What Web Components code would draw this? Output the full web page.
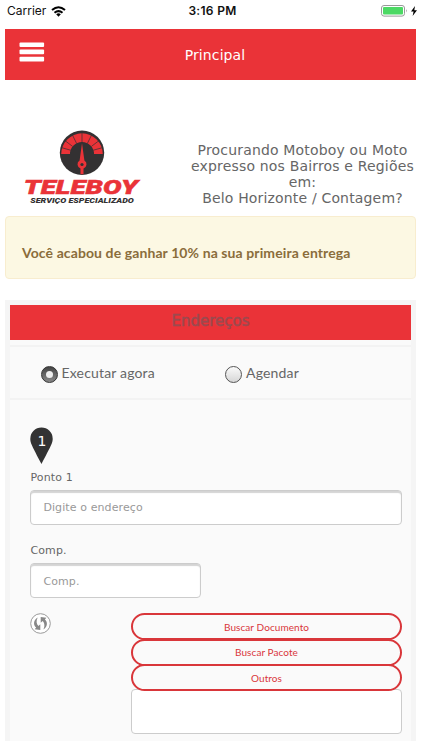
<!DOCTYPE html>
<html lang="pt-BR">
<head>
<meta charset="utf-8">
<title>Teleboy</title>
<style>
  * { box-sizing: border-box; }
  body {
    margin: 0;
    width: 422px;
    height: 750px;
    overflow: hidden;
    background: #fff;
    color: #666;
    font-family: "DejaVu Sans", sans-serif;
    --red: #ea3338;
    --lato: Lato, sans-serif;
  }
</style>
</head>
<body>
<app-screen>
  <status-bar slot="status" carrier="Carrier" time="3:16 PM"></status-bar>
  <app-header>Principal</app-header>
  <brand-hero>
    <div>Procurando Motoboy ou Moto</div>
    <div>expresso nos Bairros e Regiões</div>
    <div>em:</div>
    <div>Belo Horizonte / Contagem?</div>
  </brand-hero>
  <promo-alert>Você acabou de ganhar 10% na sua primeira entrega</promo-alert>
  <address-panel heading="Endereços">
    <radio-option slot="when" checked>Executar agora</radio-option>
    <radio-option slot="when">Agendar</radio-option>
    <map-pin>1</map-pin>
    <text-field class="address" label="Ponto 1" placeholder="Digite o endereço"></text-field>
    <text-field class="comp" label="Comp." placeholder="Comp."></text-field>
    <task-picker>
      <pill-button>Buscar Documento</pill-button>
      <pill-button>Buscar Pacote</pill-button>
      <pill-button>Outros</pill-button>
    </task-picker>
  </address-panel>
</app-screen>

<script>
class AppScreen extends HTMLElement {
  connectedCallback() {
    this.attachShadow({ mode: 'open' });
    this.shadowRoot.innerHTML = `
      <style>
        :host { display: block; }
        main { display: flex; flex-direction: column; padding: 0 6px 0 5px; }
      </style>
      <slot name="status"></slot>
      <main><slot></slot></main>
    `;
  }
}

class StatusBar extends HTMLElement {
  connectedCallback() {
    this.attachShadow({ mode: 'open' });
    this.shadowRoot.innerHTML = `
      <style>
        :host {
          display: grid;
          grid-template-columns: 1fr auto 1fr;
          align-items: center;
          height: 28px;
          padding: 0 5px 6px 7px;
          box-sizing: border-box;
          color: #111;
          font: 12px/16px Inter, sans-serif;
        }
        .left, .right { display: flex; align-items: center; }
        .left { gap: 5px; }
        .right { justify-content: flex-end; gap: 3px; }
        .time { font-weight: 600; letter-spacing: .3px; margin-left: 1px; }
        svg { display: block; }
      </style>
      <div class="left">
        <span>${this.getAttribute('carrier')}</span>
        <svg width="15" height="11" viewBox="0 0 15 11" fill="none" stroke="#000" stroke-width="2">
          <path d="M1 4.1Q7.5-1.6 14 4.1M3.5 6.8Q7.5 3.4 11.5 6.8"/>
          <path d="M5.2 8.2Q7.5 6.4 9.8 8.2L7.5 10.7Z" fill="#000" stroke="none"/>
        </svg>
      </div>
      <span class="time">${this.getAttribute('time')}</span>
      <div class="right">
        <svg width="27" height="12" viewBox="0 0 27 12">
          <rect x=".5" y=".5" width="23" height="10.6" rx="2.5" fill="#fff" stroke="#999"/>
          <rect x="2" y="2" width="20" height="7.6" rx="1" fill="#4cd964"/>
          <path d="M25 4Q26.6 5.8 25 7.6Z" fill="#999"/>
        </svg>
        <svg width="6" height="10" viewBox="0 0 6 10"><path d="M4 0L0 5.6H2.6L1.6 10L6 4.2H3.3Z"/></svg>
      </div>
    `;
  }
}

class AppHeader extends HTMLElement {
  connectedCallback() {
    this.attachShadow({ mode: 'open' });
    this.shadowRoot.innerHTML = `
      <style>
        :host {
          display: grid;
          grid-template-columns: 1fr auto 1fr;
          align-items: center;
          height: 51px;
          margin-top: .6px;
          padding: 0 14px;
          box-sizing: border-box;
          background: var(--red);
          color: #fff;
          font-size: 14px;
        }
        .title { padding-top: 2px; letter-spacing: .1px; margin-left: 9px; }
        svg { display: block; margin-bottom: 4px; }
      </style>
      <svg width="26" height="20" viewBox="0 0 26 20" fill="#fff">
        <rect x=".5" y=".5" width="24.6" height="4.6" rx="1"/>
        <rect x=".5" y="7.6" width="24.6" height="4.6" rx="1"/>
        <rect x=".5" y="14.8" width="24.6" height="4.6" rx="1"/>
      </svg>
      <span class="title"><slot></slot></span>
    `;
  }
}

class BrandHero extends HTMLElement {
  connectedCallback() {
    this.attachShadow({ mode: 'open' });
    this.shadowRoot.innerHTML = `
      <style>
        :host {
          display: flex;
          justify-content: space-between;
          height: 136px;
          padding: 50px 0 0 17px;
          box-sizing: border-box;
        }
        svg { display: block; }
        .text {
          width: 227px;
          padding-top: 12px;
          text-align: center;
          white-space: nowrap;
          font-size: 14px;
          line-height: 16.3px;
          letter-spacing: .17px;
        }
      </style>
      <svg width="120" height="78" viewBox="0 0 120 78">
        <g transform="translate(60 22.8)">
          <circle r="22.2" fill="#333132"/>
          <path d="M-20.8 1.3A20.8 20.8 0 0 1 20.8 1.3H12A12 12 0 0 0-12 1.3Z" fill="var(--red)"/>
          <path d="M-20.6-5.2L-11-2.5M-16.8-12L-9.4-6.4M-9.7-18L-5.2-9M0-21V-10M9.7-18L5.2-9M16.8-12L9.4-6.4M20.6-5.2L11-2.5" fill="none" stroke="#333132" stroke-width=".7"/>
          <path d="M0-9.5L2.4 7.8A4.3 4.3 0 0 1 1.5 15.6V21.5H-1.5V15.6A4.3 4.3 0 0 1-2.4 7.8Z" fill="var(--red)"/>
          <circle cy="11.7" r="1.6" fill="#333132"/>
        </g>
        <g font-family="Roboto, sans-serif" font-style="italic">
          <text x="1.8" y="63.8" font-size="20.5" font-weight="900" textLength="114" lengthAdjust="spacingAndGlyphs" fill="var(--red)" stroke="var(--red)" stroke-width=".5">TELEBOY</text>
          <text x="8.3" y="73.2" font-size="6.8" font-weight="900" textLength="103.5" lengthAdjust="spacingAndGlyphs" fill="#333132">SERVIÇO ESPECIALIZADO</text>
        </g>
      </svg>
      <div class="text"><slot></slot></div>
    `;
  }
}

class PromoAlert extends HTMLElement {
  connectedCallback() {
    this.attachShadow({ mode: 'open' });
    this.shadowRoot.innerHTML = `
      <style>
        :host {
          display: block;
          height: 63px;
          margin-top: .4px;
          padding: 26px 16px 0;
          box-sizing: border-box;
          border: 1px solid #f8edcf;
          border-radius: 4px;
          background: #fcf8e3;
          color: #8a6d3b;
          font: 700 14px/20px var(--lato);
          letter-spacing: .1px;
          white-space: nowrap;
        }
      </style>
      <slot></slot>
    `;
  }
}

class AddressPanel extends HTMLElement {
  connectedCallback() {
    this.attachShadow({ mode: 'open' });
    this.shadowRoot.innerHTML = `
      <style>
        :host {
          display: block;
          height: 441px;
          margin-top: 21px;
          box-sizing: border-box;
          border: solid #f5f5f5;
          border-width: 5px 5px 0;
          background: #fafafa;
        }
        h2 {
          height: 35px;
          margin: 0 0 5px;
          background: var(--red);
          color: #9b4a4f;
          text-align: center;
          font: 400 15px/33px "DejaVu Sans", sans-serif;
          -webkit-text-stroke: .5px #9b4a4f;
        }
        .when {
          display: grid;
          grid-template-columns: 184.5px 1fr;
          height: 55px;
          box-sizing: border-box;
          border: solid #f3f3f3;
          border-width: 2px 0;
          padding: 16px 0 0 30.5px;
        }
        .fields { padding: 27px 9px 0 20.4px; }
        ::slotted(text-field) { margin-bottom: 12.4px; }
        ::slotted(.comp) { width: 171px; margin-bottom: 15px; }
      </style>
      <h2>${this.getAttribute('heading')}</h2>
      <div class="when"><slot name="when"></slot></div>
      <div class="fields"><slot></slot></div>
    `;
  }
}

class RadioOption extends HTMLElement {
  connectedCallback() {
    const on = this.hasAttribute('checked');
    this.attachShadow({ mode: 'open' });
    this.shadowRoot.innerHTML = `
      <style>
        :host {
          display: flex;
          gap: 4px;
          font: 14px/20px var(--lato);
          letter-spacing: .17px;
        }
        i {
          display: grid;
          place-items: center;
          width: 17px;
          height: 17px;
          margin-top: 3px;
          box-sizing: border-box;
          border: 1px solid #555;
          border-radius: 50%;
          background: linear-gradient(#fafafa, #d6d6d6);
        }
        i.on { background: linear-gradient(#444, #888); border-color: #333; }
        i.on::after {
          content: "";
          width: 7px;
          height: 7px;
          border-radius: 50%;
          background: #eee;
        }
      </style>
      <i class="${on ? 'on' : ''}"></i><span><slot></slot></span>
    `;
  }
}

class MapPin extends HTMLElement {
  connectedCallback() {
    this.attachShadow({ mode: 'open' });
    this.shadowRoot.innerHTML = `
      <style>
        :host { display: grid; width: 23px; height: 37px; color: #fff; font-size: 14px; line-height: 28px; text-align: center; }
        svg, span { grid-area: 1 / 1; }
      </style>
      <svg width="23" height="37" viewBox="0 0 23 37"><path d="M11.5.5A11.2 11.2 0 0 0 .3 11.7C.3 16 2.2 19 11.5 37C20.8 19 22.7 16 22.7 11.7A11.2 11.2 0 0 0 11.5.5Z" fill="#333"/></svg>
      <span><slot></slot></span>
    `;
  }
}

class TextField extends HTMLElement {
  connectedCallback() {
    this.attachShadow({ mode: 'open' });
    this.shadowRoot.innerHTML = `
      <style>
        :host { display: block; font-size: 11px; }
        label { display: block; height: 26px; line-height: 28px; letter-spacing: .15px; }
        input {
          display: block;
          width: 100%;
          height: 35px;
          box-sizing: border-box;
          padding: 1px 12px 0;
          border: 1px solid #ccc;
          border-radius: 4px;
          background: #fff;
          box-shadow: inset 0 2px 1px #d4d4d4;
          font: 11px "DejaVu Sans", sans-serif;
          letter-spacing: .1px;
        }
        input::placeholder { color: #999; opacity: 1; }
      </style>
      <label>${this.getAttribute('label')}</label>
      <input type="text" placeholder="${this.getAttribute('placeholder')}">
    `;
  }
}

class TaskPicker extends HTMLElement {
  connectedCallback() {
    this.attachShadow({ mode: 'open' });
    this.shadowRoot.innerHTML = `
      <style>
        :host { display: grid; grid-template-columns: 1fr 271px; }
        .list { display: flex; flex-direction: column; }
        textarea {
          height: 45px;
          margin: -.5px 0 0;
          box-sizing: border-box;
          border: 1px solid #ccc;
          border-radius: 4px;
          background: #fff;
          resize: none;
        }
      </style>
      <svg width="21" height="21" viewBox="0 0 21 21">
        <circle cx="10.5" cy="10.5" r="9.8" fill="#fff" stroke="#999"/>
        <g fill="#888">
          <path d="M7.7 4.4C3.4 6.8 3 12 6.1 14.4L4.7 16.2L10.3 17V11.3L8.4 13C6.3 11.1 6 7.2 7.7 4.4Z"/>
          <path d="M13.3 16.6C17.6 14.2 18 9 14.9 6.6L16.3 4.8L10.7 4V9.7L12.6 8C14.7 9.9 15 13.8 13.3 16.6Z"/>
        </g>
      </svg>
      <div class="list"><slot></slot><textarea></textarea></div>
    `;
  }
}

class PillButton extends HTMLElement {
  connectedCallback() {
    this.attachShadow({ mode: 'open' });
    this.shadowRoot.innerHTML = `
      <style>
        :host { display: block; position: relative; z-index: 1; margin-bottom: -1.5px; }
        button {
          display: block;
          width: 100%;
          height: 27px;
          padding: 0;
          border: 2px solid #d9363a;
          border-radius: 14px;
          background: transparent;
          color: #d9363a;
          font: 10px/22px var(--lato);
          letter-spacing: .08px;
        }
      </style>
      <button type="button"><slot></slot></button>
    `;
  }
}

customElements.define('app-screen', AppScreen);
customElements.define('status-bar', StatusBar);
customElements.define('app-header', AppHeader);
customElements.define('brand-hero', BrandHero);
customElements.define('promo-alert', PromoAlert);
customElements.define('address-panel', AddressPanel);
customElements.define('radio-option', RadioOption);
customElements.define('map-pin', MapPin);
customElements.define('text-field', TextField);
customElements.define('task-picker', TaskPicker);
customElements.define('pill-button', PillButton);
</script>
</body>
</html>
